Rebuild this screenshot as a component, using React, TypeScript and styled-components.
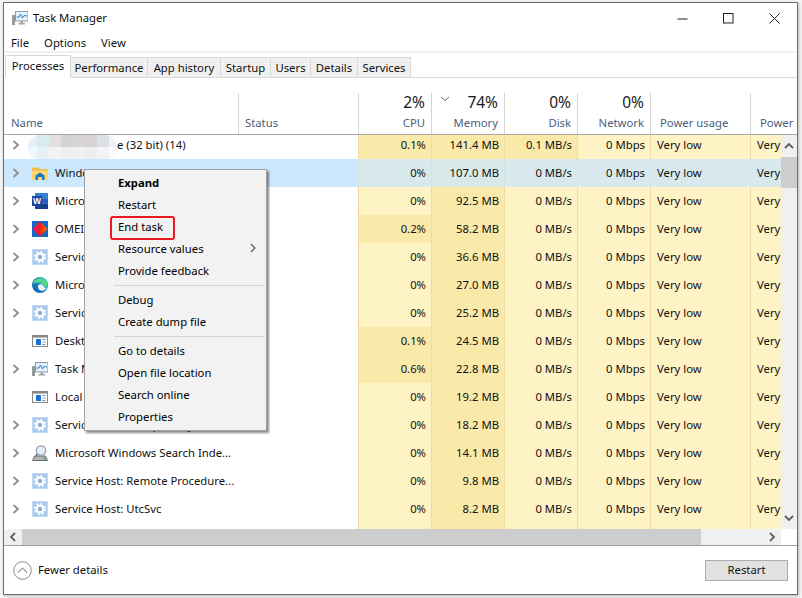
import React from "react";
import styled, { createGlobalStyle } from "styled-components";

const Global = createGlobalStyle`
  html, body { margin: 0; padding: 0; background: #fff; }
  #root { width: 802px; height: 598px; overflow: hidden; }
  * { box-sizing: border-box; }
`;

const Page = styled.div`
  width: 802px;
  height: 598px;
  padding: 2px 4px 3px 3px;
  background: #f4f4f4;
  font-family: "Noto Sans", "Open Sans", sans-serif;
  font-size: 11.3px;
  color: #111;
`;
const Win = styled.div`
  position: relative;
  width: 795px;
  height: 593px;
  background: #fff;
  border: 1px solid #6f6f6f;
  display: flex;
  flex-direction: column;
  box-shadow: 1px 1px 3px rgba(0,0,0,.25);
`;
const TitleBar = styled.div`
  height: 30px;
  flex: none;
  display: flex;
  align-items: center;
  padding-left: 8px;
`;
const TitleText = styled.span`
  margin: 0 0 2px 5px;
  flex: 1;
`;
const WinBtn = styled.div`
  width: 46px;
  height: 30px;
  display: flex;
  align-items: center;
  justify-content: center;
`;
const MenuBar = styled.div`
  height: 18px;
  flex: none;
  display: flex;
  align-items: center;
  gap: 15px;
  padding-left: 7px;
`;
const Strip = styled.div`
  height: 2px;
  flex: none;
  background: #f0f0f0;
`;
const TabBar = styled.div`
  height: 25px;
  flex: none;
  padding: 2px 0 0 1px;
  display: flex;
  align-items: flex-end;
  border-bottom: 1px solid #dadada;
`;
const Tab = styled.div<{ $w: number; $active?: boolean }>`
  width: ${p => p.$w}px;
  height: ${p => (p.$active ? 23 : 21)}px;
  margin-bottom: -1px;
  display: flex;
  align-items: center;
  justify-content: center;
  padding-bottom: ${p => (p.$active ? 3 : 0)}px;
  background: ${p => (p.$active ? "#fff" : "#f0f0f0")};
  border: 1px solid #d9d9d9;
  border-left-width: ${p => (p.$active ? 1 : 0)}px;
  border-bottom-color: ${p => (p.$active ? "#fff" : "#d9d9d9")};
`;
const Header = styled.div`
  margin-top: 15px;
  height: 42px;
  flex: none;
  display: grid;
  grid-template-columns: 235px 120px 73px 73px 73px 73px 100px 1fr;
  border-bottom: 1px solid #a8a8a8;
`;
const HeadCell = styled.div<{ $right?: boolean; $pad?: number }>`
  position: relative;
  height: 41px;
  border-right: 1px solid #d4d4d4;
  padding: 0 ${p => (p.$right ? 6 : 0)}px 0 ${p => (p.$right ? 0 : p.$pad ?? 6)}px;
  display: flex;
  flex-direction: column;
  justify-content: flex-end;
  align-items: ${p => (p.$right ? "flex-end" : "flex-start")};
  &:last-child { border-right: 0; overflow: hidden; white-space: nowrap; }
`;
const Percent = styled.div`
  font-size: 15.5px;
  line-height: 20px;
  margin-bottom: 4px;
  color: #1a1a1a;
`;
const Label = styled.div`
  line-height: 14px;
  margin-bottom: 4px;
  color: #4c607a;
`;
const SortMark = styled.svg`
  position: absolute;
  left: 8px;
  top: 3px;
`;
const Body = styled.div`
  height: 394px;
  flex: none;
  display: flex;
`;
const List = styled.div`
  position: relative;
  width: 777px;
  flex: none;
  overflow: hidden;
`;
const RowsInner = styled.div`
  margin-top: -4px;
`;
const Row = styled.div<{ $selected?: boolean }>`
  height: 28px;
  display: grid;
  grid-template-columns: 235px 119px 73px 73px 73px 73px 100px 1fr;
  background: ${p => (p.$selected ? "#cce8ff" : "#fff")};
`;
const NameCell = styled.div`
  display: flex;
  align-items: center;
  padding-left: 8px;
  white-space: nowrap;
  overflow: hidden;
`;
const NameText = styled.span<{ $indent?: number }>`
  margin: 0 0 2px ${p => p.$indent ?? 0}px;
`;
const ChevronSlot = styled.div`
  width: 20px;
  flex: none;
  display: flex;
  align-items: center;
`;
const IconSlot = styled.div`
  width: 23px;
  flex: none;
  display: flex;
  align-items: center;
`;
const Heat = styled.div<{ $dark?: boolean; $selected?: boolean; $left?: boolean }>`
  background: ${p =>
    p.$selected ? (p.$dark ? "#d8e9e8" : "#d8e9ee") : p.$dark ? "#f9eaaa" : "#fdf3c4"};
  border-left: 1px solid ${p => (p.$selected ? "#d3e3e6" : "#f0dca2")};
  display: flex;
  align-items: center;
  justify-content: ${p => (p.$left ? "flex-start" : "flex-end")};
  padding: ${p => (p.$left ? "0 0 2px 6px" : "0 5px 2px 0")};
  white-space: nowrap;
  overflow: hidden;
`;
const Mosaic = styled.div`
  position: absolute;
  left: 24px;
  top: 0;
  width: 89px;
  height: 24px;
  border-radius: 12px;
  overflow: hidden;
  display: grid;
  grid-template-columns: 9px repeat(6, 12px) 8px;
  grid-template-rows: 12px 12px;
`;
const Tile = styled.div<{ $c: string }>`
  background: ${p => p.$c};
`;
const VScroll = styled.div`
  width: 16px;
  flex: none;
  background: #f0f0f0;
  display: flex;
  flex-direction: column;
`;
const ScrollBtn = styled.div`
  height: 22px;
  flex: none;
  display: flex;
  align-items: center;
  justify-content: center;
`;
const VThumb = styled.div`
  height: 31px;
  flex: none;
  background: #cdcdcd;
`;
const VTrack = styled.div`
  flex: 1;
`;
const HScrollRow = styled.div`
  height: 16px;
  flex: none;
  display: flex;
`;
const HTrack = styled.div`
  width: 777px;
  flex: none;
  display: flex;
  background: #f0f0f0;
`;
const HBtn = styled.div`
  width: 18px;
  flex: none;
  display: flex;
  align-items: center;
  justify-content: center;
`;
const HThumb = styled.div`
  width: 679px;
  flex: none;
  background: #cdcdcd;
`;
const HRest = styled.div`
  flex: 1;
`;
const Footer = styled.div`
  flex: 1;
  min-height: 0;
  border-top: 1px solid #a0a0a0;
  display: flex;
  align-items: center;
  padding: 0 9px 0 9px;
`;
const FewerText = styled.span`
  margin: 0 0 2px 6px;
  flex: 1;
`;
const FooterBtn = styled.div`
  width: 83px;
  height: 21px;
  padding-bottom: 1px;
  background: #e1e1e1;
  border: 1px solid #adadad;
  display: flex;
  align-items: center;
  justify-content: center;
`;
const CtxMenu = styled.div`
  position: absolute;
  left: 80px;
  top: 166px;
  width: 183px;
  background: #f2f2f2;
  border: 1px solid #a0a0a0;
  padding: 2px 2px;
  box-shadow: 2px 2px 2px rgba(0,0,0,.45);
  color: #000;
  z-index: 3;
`;
const MenuItem = styled.div<{ $bold?: boolean }>`
  position: relative;
  height: 22px;
  display: flex;
  align-items: center;
  justify-content: space-between;
  padding: 0 8px 2px 31px;
  font-weight: ${p => (p.$bold ? 700 : 400)};
`;
const MenuSep = styled.div`
  height: 7px;
  margin-left: 27px;
  padding-top: 3px;
  &::after {
    content: "";
    display: block;
    height: 1px;
    background: #d5d5d5;
  }
`;
const RedBox = styled.div`
  position: absolute;
  left: 23px;
  top: 0;
  width: 65px;
  height: 24px;
  border: 2.5px solid #ea1a22;
  border-radius: 3px;
`;

const Chevron = () => (
  <svg width="8" height="10" viewBox="0 0 8 10">
    <path d="M1.5 1 L6 5 L1.5 9" fill="none" stroke="#8f8f8f" strokeWidth="1.8" />
  </svg>
);
const Gear = () => (
  <svg width="16" height="16" viewBox="0 0 16 16">
    <rect x="0.5" y="0.5" width="15" height="15" fill="#a8caec" stroke="#c4dcf3" />
    <circle cx="8" cy="8" r="3.4" fill="#86b2e0" stroke="#fff" strokeWidth="2.2" />
    <circle cx="8" cy="8" r="5.2" fill="none" stroke="#fff" strokeWidth="1.8" strokeDasharray="2 2.08" />
  </svg>
);
const Folder = () => (
  <svg width="16" height="16" viewBox="0 0 16 16">
    <path d="M0 2.5 H6 L8 4 H16 V15 H0 Z" fill="#f0bb45" />
    <path d="M0 5.5 H16 V15 H0 Z" fill="#fcd774" />
    <path d="M3.5 15 V10.5 L8 7.5 L12.5 10.5 V15 H10 V12 H6 V15 Z" fill="#1877c4" />
  </svg>
);
const Word = () => (
  <svg width="16" height="16" viewBox="0 0 16 16">
    <rect x="3" y="0" width="13" height="5.4" fill="#2f7fd6" />
    <rect x="3" y="5.3" width="13" height="5.4" fill="#1f5fbf" />
    <rect x="3" y="10.6" width="13" height="5.4" fill="#123f90" />
    <rect x="0" y="3" width="10" height="10" fill="#17469b" />
    <text x="5" y="11" fontSize="8.5" fontWeight="700" fill="#fff" textAnchor="middle" fontFamily="Liberation Sans, sans-serif">W</text>
  </svg>
);
const Omei = () => (
  <svg width="16" height="16" viewBox="0 0 16 16">
    <defs>
      <linearGradient id="omei" x1="0" x2="1" y1="0" y2="0">
        <stop offset="0" stopColor="#f0176e" />
        <stop offset="0.5" stopColor="#f41c1c" />
        <stop offset="1" stopColor="#ff7a00" />
      </linearGradient>
    </defs>
    <rect width="16" height="16" fill="#1766c4" />
    <path d="M8 0.5 L15.5 8 L8 15.5 L0.5 8 Z" fill="url(#omei)" />
  </svg>
);
const Edge = () => (
  <svg width="16" height="16" viewBox="0 0 16 16">
    <defs>
      <linearGradient id="edgeA" x1="0" x2="1" y1="1" y2="0">
        <stop offset="0" stopColor="#0b5aa8" />
        <stop offset="1" stopColor="#27a8e6" />
      </linearGradient>
    </defs>
    <circle cx="8" cy="8" r="8" fill="url(#edgeA)" />
    <path d="M1 6 C3 1 11 -1 15 4 C16.5 7 15.5 10 13 10.5 C10 11 11 7 8.5 6 C5 5 2.5 7 1 6 Z" fill="#4fd88a" />
    <path d="M6 9.5 C6 7 10 6.5 11 9 C11.5 10.5 13 11 14.5 10.5 C13 14 9 14.5 7.5 13 C6.5 12 6 11 6 9.5 Z" fill="#fff" opacity=".9" />
  </svg>
);
const AppWin = () => (
  <svg width="16" height="16" viewBox="0 0 16 16">
    <rect x="0.5" y="2.5" width="15" height="11" fill="#fff" stroke="#8a8a8a" />
    <rect x="1" y="3" width="14" height="1.6" fill="#8a8a8a" />
    <rect x="4" y="6" width="5" height="6" fill="#1a73d8" />
    <path d="M10.5 6.5 H13.5 M10.5 9 H13.5 M10.5 11.5 H13.5" stroke="#8a8a8a" />
  </svg>
);
const TaskIcon = () => (
  <svg width="16" height="16" viewBox="0 0 16 16">
    <rect x="0" y="5" width="3" height="10" fill="#9a9a9a" />
    <rect x="0.8" y="6.5" width="1.4" height="1" fill="#5fc25f" />
    <rect x="3.5" y="1.5" width="12.5" height="9.5" fill="#e6f2fb" stroke="#8d9aa6" strokeWidth="1" />
    <path d="M4.5 7 L7 7 L8.5 4 L10.5 8 L12 5.5 L15 6" fill="none" stroke="#2c7fc9" strokeWidth="1" />
    <path d="M8.5 11 H11 V13 H13 V14.5 H6.5 V13 H8.5 Z" fill="#a5a5a5" />
  </svg>
);
const Indexer = () => (
  <svg width="16" height="16" viewBox="0 0 16 16">
    <path d="M0.5 15.5 L2.5 11 H13.5 L15.5 15.5 Z" fill="#b5b5b5" stroke="#707070" />
    <rect x="11.5" y="12.5" width="2" height="2" fill="#47b347" />
    <circle cx="9" cy="5.5" r="4.7" fill="#e6eff7" stroke="#8fa2b4" strokeWidth="1.2" />
    <path d="M5.5 9 L3 12" stroke="#7a7a7a" strokeWidth="1.8" />
  </svg>
);
const NavArrow = ({ d }: { d: string }) => (
  <svg width="10" height="10" viewBox="0 0 10 10">
    <path d={d} fill="none" stroke="#606060" strokeWidth="1.8" />
  </svg>
);

const tabs: [string, number][] = [
  ["Processes", 66], ["Performance", 77], ["App history", 73], ["Startup", 50],
  ["Users", 40], ["Details", 47], ["Services", 53],
];

type R = {
  name: string; icon?: React.ReactNode; exp?: boolean; cpu: string; cd?: boolean;
  mem: string; disk?: string; dd?: boolean;
};
const rows: R[] = [
  { name: "e (32 bit) (14)", exp: true, cpu: "0.1%", cd: true, mem: "141.4 MB", disk: "0.1 MB/s", dd: true },
  { name: "Windows Explorer (8)", icon: <Folder />, exp: true, cpu: "0%", mem: "107.0 MB" },
  { name: "Microsoft Word (32 bit)", icon: <Word />, exp: true, cpu: "0%", mem: "92.5 MB" },
  { name: "OMEI Partition Assistant", icon: <Omei />, exp: true, cpu: "0.2%", cd: true, mem: "58.2 MB" },
  { name: "Service Host: Windows", icon: <Gear />, exp: true, cpu: "0%", mem: "36.6 MB" },
  { name: "Microsoft Edge (9)", icon: <Edge />, exp: true, cpu: "0%", mem: "27.0 MB" },
  { name: "Service Host: Network", icon: <Gear />, exp: true, cpu: "0%", mem: "25.2 MB" },
  { name: "Desktop Window Manager", icon: <AppWin />, cpu: "0.1%", cd: true, mem: "24.5 MB" },
  { name: "Task Manager", icon: <TaskIcon />, exp: true, cpu: "0.6%", cd: true, mem: "22.8 MB" },
  { name: "Local Security Authority", icon: <AppWin />, cpu: "0%", mem: "19.2 MB" },
  { name: "Service Host: Group Policy", icon: <Gear />, exp: true, cpu: "0%", mem: "18.2 MB" },
  { name: "Microsoft Windows Search Inde...", icon: <Indexer />, exp: true, cpu: "0%", mem: "14.1 MB" },
  { name: "Service Host: Remote Procedure...", icon: <Gear />, exp: true, cpu: "0%", mem: "9.8 MB" },
  { name: "Service Host: UtcSvc", icon: <Gear />, exp: true, cpu: "0%", mem: "8.2 MB" },
];

const mosaic = [
  "#e4f1fc", "#d8ecee", "#e3e0df", "#d3d3d3", "#d8d5d2", "#d8d3d4", "#dce0e4", "#eff1f4",
  "#eef7fe", "#e6f1f3", "#f4f3f1", "#f0f0f0", "#f1f1ef", "#efedee", "#f3f3f5", "#fafafb",
];

const menuGroups: { t: string; bold?: boolean; sub?: boolean; box?: boolean }[][] = [
  [{ t: "Expand", bold: true }, { t: "Restart" }, { t: "End task", box: true }, { t: "Resource values", sub: true }, { t: "Provide feedback" }],
  [{ t: "Debug" }, { t: "Create dump file" }],
  [{ t: "Go to details" }, { t: "Open file location" }, { t: "Search online" }, { t: "Properties" }],
];

export default function App() {
  return (
    <Page>
      <Global />
      <Win>
        <TitleBar>
          <TaskIcon />
          <TitleText>Task Manager</TitleText>
          <WinBtn>
            <svg width="11" height="11" viewBox="0 0 11 11"><path d="M0.5 6 H10.5" stroke="#222" /></svg>
          </WinBtn>
          <WinBtn>
            <svg width="11" height="11" viewBox="0 0 11 11"><rect x="0.5" y="0.5" width="9.5" height="9.5" fill="none" stroke="#222" /></svg>
          </WinBtn>
          <WinBtn>
            <svg width="11" height="11" viewBox="0 0 11 11"><path d="M0.5 0.5 L10.5 10.5 M10.5 0.5 L0.5 10.5" stroke="#222" /></svg>
          </WinBtn>
        </TitleBar>
        <MenuBar>
          <span>File</span>
          <span>Options</span>
          <span>View</span>
        </MenuBar>
        <Strip />
        <TabBar>
          {tabs.map(([t, w], i) => (
            <Tab key={t} $w={w} $active={i === 0}>{t}</Tab>
          ))}
        </TabBar>
        <Header>
          <HeadCell $pad={7}><Label>Name</Label></HeadCell>
          <HeadCell><Label>Status</Label></HeadCell>
          <HeadCell $right><Percent>2%</Percent><Label>CPU</Label></HeadCell>
          <HeadCell $right>
            <SortMark width="10" height="6" viewBox="0 0 10 6"><path d="M1 1 L5 4.5 L9 1" fill="none" stroke="#5a6c84" /></SortMark>
            <Percent>74%</Percent><Label>Memory</Label>
          </HeadCell>
          <HeadCell $right><Percent>0%</Percent><Label>Disk</Label></HeadCell>
          <HeadCell $right><Percent>0%</Percent><Label>Network</Label></HeadCell>
          <HeadCell $pad={9}><Label>Power usage</Label></HeadCell>
          <HeadCell $pad={9}><Label>Power usage trend</Label></HeadCell>
        </Header>
        <Body>
          <List>
            <RowsInner>
              {rows.map((r, i) => {
                const sel = i === 1;
                return (
                  <Row key={i} $selected={sel}>
                    <NameCell>
                      <ChevronSlot>{r.exp && <Chevron />}</ChevronSlot>
                      <IconSlot>{r.icon}</IconSlot>
                      <NameText $indent={i === 0 ? 62 : 0}>{r.name}</NameText>
                    </NameCell>
                    <div />
                    <Heat $selected={sel} $dark={r.cd}>{r.cpu}</Heat>
                    <Heat $selected={sel} $dark>{r.mem}</Heat>
                    <Heat $selected={sel} $dark={r.dd}>{r.disk ?? "0 MB/s"}</Heat>
                    <Heat $selected={sel}>0 Mbps</Heat>
                    <Heat $selected={sel} $left>Very low</Heat>
                    <Heat $selected={sel} $left>Very low</Heat>
                  </Row>
                );
              })}
              <Row>
                <div /><div />
                <Heat /><Heat $dark /><Heat /><Heat /><Heat /><Heat />
              </Row>
            </RowsInner>
            <Mosaic>
              {mosaic.map((c, i) => <Tile key={i} $c={c} />)}
            </Mosaic>
          </List>
          <VScroll>
            <ScrollBtn><NavArrow d="M1 7 L5 3 L9 7" /></ScrollBtn>
            <VThumb />
            <VTrack />
            <ScrollBtn><NavArrow d="M1 3 L5 7 L9 3" /></ScrollBtn>
          </VScroll>
        </Body>
        <HScrollRow>
          <HTrack>
            <HBtn><NavArrow d="M7 1 L3 5 L7 9" /></HBtn>
            <HThumb />
            <HRest />
            <HBtn><NavArrow d="M3 1 L7 5 L3 9" /></HBtn>
          </HTrack>
        </HScrollRow>
        <Footer>
          <svg width="19" height="19" viewBox="0 0 19 19">
            <circle cx="9.5" cy="9.5" r="8.8" fill="none" stroke="#8e8e8e" />
            <path d="M5 11.5 L9.5 7 L14 11.5" fill="none" stroke="#9a9a9a" strokeWidth="1.1" />
          </svg>
          <FewerText>Fewer details</FewerText>
          <FooterBtn>Restart</FooterBtn>
        </Footer>
        <CtxMenu>
          {menuGroups.map((g, gi) => (
            <React.Fragment key={gi}>
              {gi > 0 && <MenuSep />}
              {g.map(m => (
                <MenuItem key={m.t} $bold={m.bold}>
                  <span>{m.t}</span>
                  {m.sub && (
                    <svg width="6" height="10" viewBox="0 0 6 10"><path d="M1 1 L5 5 L1 9" fill="none" stroke="#555" strokeWidth="1.1" /></svg>
                  )}
                  {m.box && <RedBox />}
                </MenuItem>
              ))}
            </React.Fragment>
          ))}
        </CtxMenu>
      </Win>
    </Page>
  );
}
